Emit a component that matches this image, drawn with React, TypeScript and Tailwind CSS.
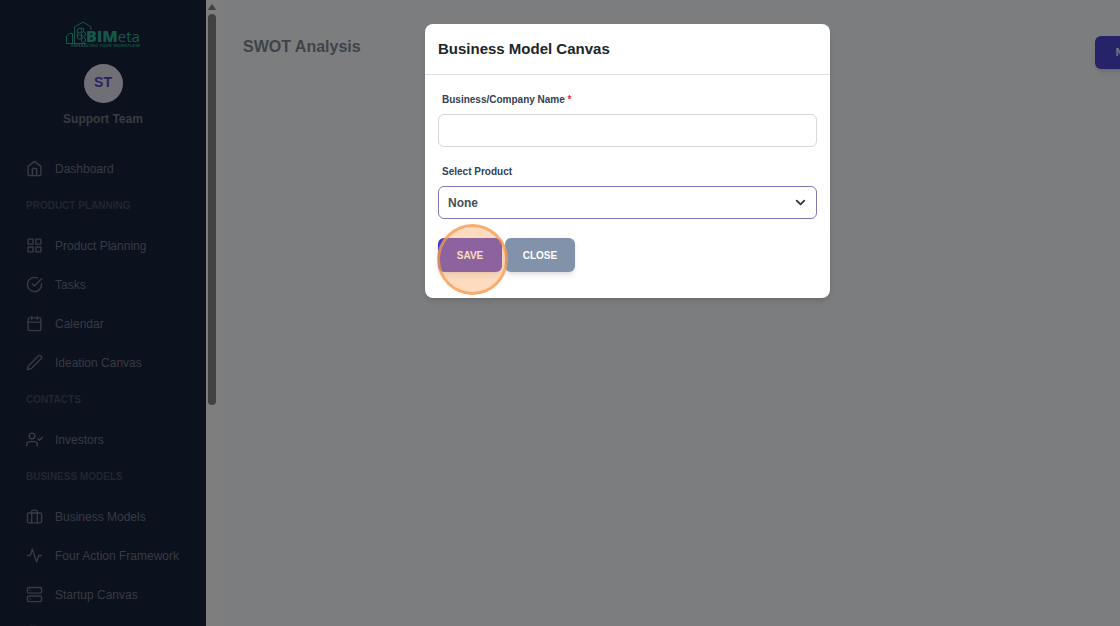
import type { ReactNode } from "react";
import {
  FiActivity,
  FiBriefcase,
  FiCalendar,
  FiCheckCircle,
  FiChevronDown,
  FiFileText,
  FiGrid,
  FiHome,
  FiServer,
  FiUserCheck,
} from "react-icons/fi";
import { Pen } from "lucide-react";

type NavEntry = { heading?: string; label?: string; icon?: ReactNode };

const iconProps = { size: 17, className: "shrink-0" };

const navEntries: NavEntry[] = [
  { label: "Dashboard", icon: <FiHome {...iconProps} /> },
  { heading: "PRODUCT PLANNING" },
  { label: "Product Planning", icon: <FiGrid {...iconProps} /> },
  { label: "Tasks", icon: <FiCheckCircle {...iconProps} /> },
  { label: "Calendar", icon: <FiCalendar {...iconProps} /> },
  { label: "Ideation Canvas", icon: <Pen {...iconProps} /> },
  { heading: "CONTACTS" },
  { label: "Investors", icon: <FiUserCheck {...iconProps} /> },
  { heading: "BUSINESS MODELS" },
  { label: "Business Models", icon: <FiBriefcase {...iconProps} /> },
  { label: "Four Action Framework", icon: <FiActivity {...iconProps} /> },
  { label: "Startup Canvas", icon: <FiServer {...iconProps} /> },
];

function Logo() {
  return (
    <svg width="76" height="28" viewBox="0 0 76 28" fill="none" aria-label="BIMeta">
      <g stroke="#2fae94" strokeWidth="1">
        <path d="M7 23.500H1.500V16L4.500 13.500H7.500V23.500H21" />
        <path d="M9.500 23.500V7L18 2L26 7V10" />
        <circle cx="14.500" cy="10.500" r="2.200" />
        <circle cx="18.500" cy="14" r="2.200" />
        <circle cx="14.500" cy="17" r="2.200" />
        <circle cx="18.500" cy="20" r="2.200" />
        <path d="M14.500 8.300H18.500V11.800M12.300 10.500V17" />
      </g>
      <text x="21" y="22" fontSize="16" fill="#2fae94" fontFamily="Open Sans, sans-serif">
        <tspan fontWeight="800">BIM</tspan>
        <tspan fontSize="15">eta</tspan>
      </text>
      <text x="6" y="27" fontSize="4" fontWeight="700" fill="#2a8f80" fontFamily="DejaVu Sans, sans-serif">
        ENHANCING YOUR WORKFLOW
      </text>
    </svg>
  );
}

function Sidebar() {
  return (
    <aside className="w-[206px] shrink-0 overflow-hidden bg-[#17223a]">
      <div className="flex flex-col items-center pt-5">
        <Logo />
        <div className="mt-4 flex size-[39px] items-center justify-center rounded-full bg-[#e2deec] pb-1 text-sm font-bold text-[#5046c8]">
          ST
        </div>
        <p className="mt-2 text-xs font-bold text-[#717783]">Support Team</p>
        <div className="mt-2 h-px w-28 bg-[#1a2438]" />
      </div>
      <nav className="mt-[13px]">
        {navEntries.map((entry) =>
          entry.heading ? (
            <h2
              key={entry.heading}
              className="flex h-[38px] items-center pb-1 pl-[26px] text-[10px] font-bold text-[#434c61]"
            >
              {entry.heading}
            </h2>
          ) : (
            <a
              key={entry.label}
              href="#"
              className="flex h-[39px] items-center gap-3 pl-[26px] text-xs text-[#6d7585]"
            >
              {entry.icon}
              {entry.label}
            </a>
          )
        )}
        <div className="flex h-[39px] items-center pl-[26px] text-[#6d7585]">
          <FiFileText {...iconProps} />
        </div>
      </nav>
    </aside>
  );
}

function Scrollbar() {
  return (
    <div className="flex w-3 shrink-0 flex-col items-center bg-[#fcfcfc]">
      <svg width="8" height="14" viewBox="0 0 8 14">
        <path d="M4 4.500L7.500 9.500H0.500Z" fill="#858585" stroke="#858585" strokeLinejoin="round" />
      </svg>
      <div className="h-[391px] w-2 rounded-full bg-[#858585]" />
    </div>
  );
}

function BusinessModelDialog() {
  return (
    <div
      role="dialog"
      aria-labelledby="dialog-title"
      className="w-full max-w-[405px] rounded-lg bg-white shadow-md"
    >
      <div className="border-b border-[#dfe0e2] p-[13px]">
        <h2 id="dialog-title" className="text-[15px] leading-6 font-bold text-[#212529]">
          Business Model Canvas
        </h2>
      </div>
      <form className="px-[13px] pt-[17px] pb-[26px]" onSubmit={(e) => e.preventDefault()}>
        <label htmlFor="company" className="block pl-1 text-[10px] leading-4 font-bold text-[#344054]">
          Business/Company Name <span className="text-[#e03131]">*</span>
        </label>
        <input
          id="company"
          type="text"
          className="mt-[6px] block h-[33px] w-full rounded-md border border-[#d6d8dc] px-[9px] text-xs outline-none"
        />
        <label htmlFor="product" className="mt-[17px] block pl-1 text-[10px] leading-4 font-bold text-[#344054]">
          Select Product
        </label>
        <div className="relative mt-[6px]">
          <select
            id="product"
            className="block h-[33px] w-full appearance-none rounded-md border border-[#7d79b0] bg-white px-[9px] text-xs font-bold text-[#495057] outline-none"
          >
            <option>None</option>
          </select>
          <FiChevronDown
            size={15}
            strokeWidth={3}
            className="pointer-events-none absolute top-[9px] right-[9px] text-[#343a40]"
          />
        </div>
        <div className="mt-[19px] flex gap-[3px]">
          <div className="relative">
            <button
              type="submit"
              className="h-[34px] w-16 rounded-md bg-[#4338ca] text-[10px] font-bold text-white shadow-md"
            >
              SAVE
            </button>
            {/* Click highlight */}
            <span className="pointer-events-none absolute -top-[14px] -left-px size-[71px] rounded-full border-[3px] border-[#f59a4c]/70 bg-[#f9a45f]/40" />
          </div>
          <button
            type="button"
            className="h-[34px] w-[70px] rounded-md bg-[#8392ab] text-[10px] font-bold text-white shadow-md"
          >
            CLOSE
          </button>
        </div>
      </form>
    </div>
  );
}

export default function App() {
  return (
    <div className="relative flex h-screen overflow-hidden bg-[#f8fafc] font-['Liberation_Sans',Arial,sans-serif]">
      <Sidebar />
      <Scrollbar />
      <main className="min-w-0 flex-1">
        <header className="-mr-10 flex items-start justify-between pt-9 pl-[25px]">
          <h1 className="text-base leading-[22px] font-bold text-[#7f8897]">SWOT Analysis</h1>
          <button
            type="button"
            className="h-[33px] w-[65px] rounded-md bg-[#4d47d0] text-[10px] font-bold text-white shadow-md"
          >
            NEW
          </button>
        </header>
      </main>

      <div className="absolute inset-0 flex items-start justify-center bg-black/50 pt-6 pl-[135px]">
        <BusinessModelDialog />
      </div>
    </div>
  );
}
